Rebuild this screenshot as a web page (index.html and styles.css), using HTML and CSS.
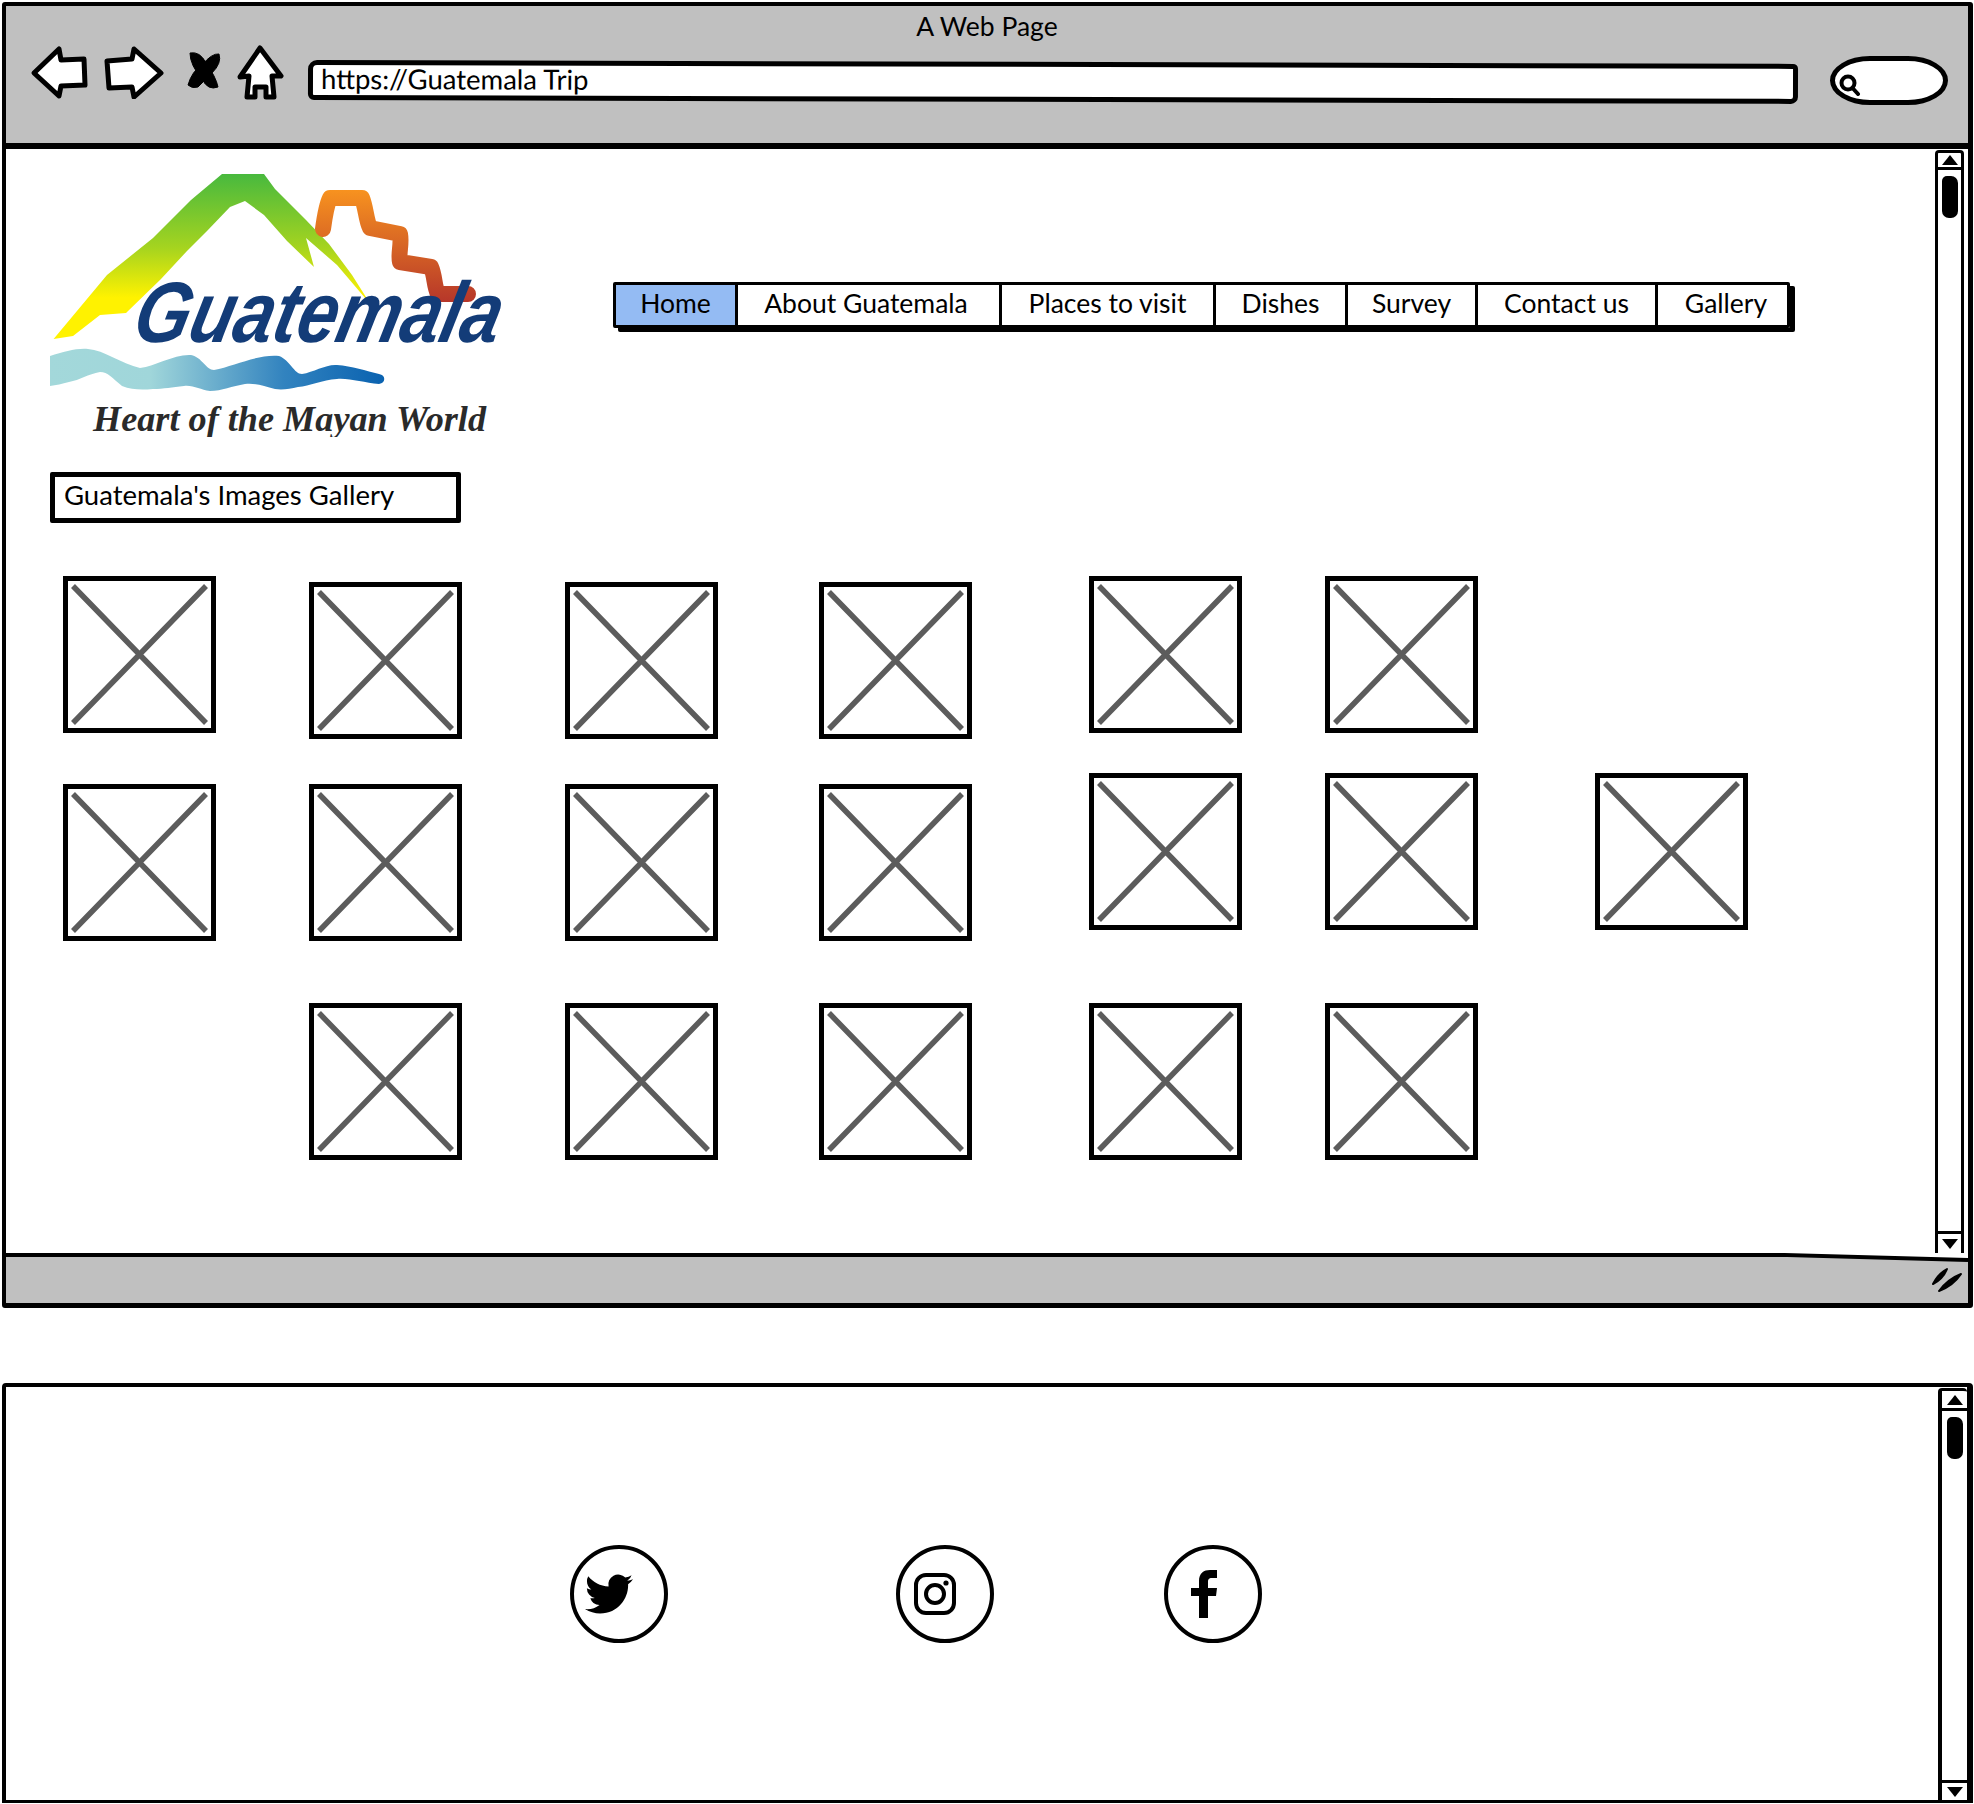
FILE: index.html
```html
<!DOCTYPE html>
<html lang="en">
<head>
  <meta charset="UTF-8" />
  <title>A Web Page</title>
  <link rel="stylesheet" href="styles.css">
</head>
<body>
  <svg class="defs" width="0" height="0">
    <symbol id="cross" viewBox="0 0 143 147">
      <path d="M5 5 L138 142 M138 5 L5 142" />
    </symbol>
  </svg>

  <div class="window">
    <header class="toolbar">
      <div class="title">A Web Page</div>
      <div class="toolbar-row">
        <svg class="tool tool-back" viewBox="30 46 58 54"><path d="M34 74 L59 50 L61 61 L84 60 L85 86 L61 87 L59 97 Z" /></svg>
        <svg class="tool tool-forward" viewBox="104 46 60 54"><path d="M107 62 L132 60 L134 50 L161 74 L134 98 L132 88 L109 89 Z" /></svg>
        <svg class="tool tool-stop" viewBox="184 46 40 54"><path d="M190 54 Q200 52 206 64 Q216 78 218 88 Q208 92 202 80 Q190 66 190 54 Z M219 55 Q222 64 212 74 L198 88 Q192 90 188 86 Q192 72 202 66 Q212 54 219 55 Z" /></svg>
        <svg class="tool tool-home" viewBox="236 46 48 56"><path d="M260 49 L281 77 L272 77 L274 98 L266 98 L266 88 L255 88 L255 98 L247 98 L249 77 L240 78 Z" /></svg>
        <div class="url">https://Guatemala Trip</div>
        <div class="search">
          <svg class="search-icon" viewBox="0 0 22 22"><circle cx="9" cy="9" r="6.5" /><path d="M13.5 14 L19 20" /></svg>
        </div>
      </div>
    </header>

    <div class="content">
      <main class="page">
        <div class="page-head">
          <svg class="logo" viewBox="0 0 464 263">
            <defs>
              <linearGradient id="mountain" x1="0" y1="0" x2="0" y2="1">
                <stop offset="0" stop-color="#48b93e" />
                <stop offset="0.45" stop-color="#a6d41f" />
                <stop offset="0.75" stop-color="#fff200" />
              </linearGradient>
              <linearGradient id="stairs" gradientUnits="userSpaceOnUse" x1="0" y1="15" x2="0" y2="130">
                <stop offset="0" stop-color="#f8931f" />
                <stop offset="1" stop-color="#b5352a" />
              </linearGradient>
              <linearGradient id="river" x1="0" y1="0" x2="1" y2="0">
                <stop offset="0" stop-color="#a3d8da" />
                <stop offset="0.3" stop-color="#a0d6da" />
                <stop offset="0.7" stop-color="#3283bf" />
                <stop offset="1" stop-color="#0a62b0" />
              </linearGradient>
            </defs>
            <path fill="url(#mountain)" d="M3.6 165 L57 101 L103 64 L141 26 L172 0 L214 0 L225 15 L256 46 L279 70 L302 101 L321 131 L287 91 L256 64 L264 93 L237 67 L214 41 L195 27 L180 33 L157 57 L137 77 L111 105 L76 139 L50 141 L23 162 Z" />
            <path class="logo-stairs" d="M273 55 C275 40 277 30 280 24 L312 24 C316 34 316 46 320 54 L350 60 C352 70 348 80 350 88 L381 93 C385 102 384 112 388 120 L418 120" />
            <path fill="url(#river)" d="M0 182 C14 178 26 174 38 175 C54 176 72 190 90 194 C106 192 124 180 141 181 C152 183 156 196 164 196 C184 192 208 180 229 182 C240 186 244 200 252 200 C264 198 276 190 287 191 C302 192 316 197 329 200 C336 201 336 209 329 210 C314 209 300 204 287 205 C272 206 260 212 248 213 C240 215 232 216 225 215 C214 212 206 209 195 210 C182 212 172 217 160 217 C150 216 144 211 134 212 C122 213 114 215 103 215 C92 216 82 216 72 212 C62 204 58 198 50 198 C38 200 30 206 19 208 C12 210 6 211 0 212 Z" />
            <text class="logo-name" transform="translate(80 168) skewX(-13)" x="0" y="0" textLength="366" lengthAdjust="spacingAndGlyphs">Guatemala</text>
            <text class="logo-tag" x="43" y="257" textLength="393" lengthAdjust="spacingAndGlyphs">Heart of the Mayan World</text>
          </svg>
          <nav class="menu">
            <a class="menu-item active" href="#home">Home</a>
            <a class="menu-item item-about" href="#about">About Guatemala</a>
            <a class="menu-item" href="#places">Places to visit</a>
            <a class="menu-item" href="#dishes">Dishes</a>
            <a class="menu-item" href="#survey">Survey</a>
            <a class="menu-item" href="#contact">Contact us</a>
            <a class="menu-item item-gallery" href="#gallery">Gallery</a>
          </nav>
        </div>

        <div class="gallery-title">Guatemala's Images Gallery</div>

        <div class="gallery">
          <div class="thumb"><svg><use href="#cross" /></svg></div>
          <div class="thumb low"><svg><use href="#cross" /></svg></div>
          <div class="thumb low"><svg><use href="#cross" /></svg></div>
          <div class="thumb low"><svg><use href="#cross" /></svg></div>
          <div class="thumb"><svg><use href="#cross" /></svg></div>
          <div class="thumb"><svg><use href="#cross" /></svg></div>
          <div></div>

          <div class="thumb lower"><svg><use href="#cross" /></svg></div>
          <div class="thumb lower"><svg><use href="#cross" /></svg></div>
          <div class="thumb lower"><svg><use href="#cross" /></svg></div>
          <div class="thumb lower"><svg><use href="#cross" /></svg></div>
          <div class="thumb"><svg><use href="#cross" /></svg></div>
          <div class="thumb"><svg><use href="#cross" /></svg></div>
          <div class="thumb"><svg><use href="#cross" /></svg></div>

          <div></div>
          <div class="thumb"><svg><use href="#cross" /></svg></div>
          <div class="thumb"><svg><use href="#cross" /></svg></div>
          <div class="thumb"><svg><use href="#cross" /></svg></div>
          <div class="thumb"><svg><use href="#cross" /></svg></div>
          <div class="thumb"><svg><use href="#cross" /></svg></div>
        </div>
      </main>

      <div class="scrollbar">
        <div class="scroll-btn"><span class="arrow-up"></span></div>
        <div class="scroll-thumb"></div>
        <div class="scroll-btn bottom"><span class="arrow-down"></span></div>
      </div>
    </div>

    <div class="statusbar">
      <svg class="status-edge" viewBox="0 0 300 9" preserveAspectRatio="none"><path class="status-wedge" d="M0 0 L300 0 L300 7 Q180 5 0 0 Z" /><path class="status-line" d="M0 1 Q180 5 300 7" /></svg>
      <svg class="grip" viewBox="1930 1270 34 30"><path d="M1933 1289 Q1938 1279 1947 1274 Q1943 1284 1933 1289 Z M1939 1296 Q1948 1284 1961 1279 Q1953 1291 1939 1296 Z" /></svg>
    </div>
  </div>

  <footer class="social-panel">
    <div class="social">
      <a class="social-link" href="#twitter">
        <svg class="icon-twitter" viewBox="0 0 24 24"><path d="M23.953 4.57a10 10 0 01-2.825.775 4.958 4.958 0 002.163-2.723c-.951.555-2.005.959-3.127 1.184a4.92 4.92 0 00-8.384 4.482C7.69 8.095 4.067 6.13 1.64 3.162a4.822 4.822 0 00-.666 2.475c0 1.71.87 3.213 2.188 4.096a4.904 4.904 0 01-2.228-.616v.06a4.923 4.923 0 003.946 4.827 4.996 4.996 0 01-2.212.085 4.936 4.936 0 004.604 3.417 9.867 9.867 0 01-6.102 2.105c-.39 0-.779-.023-1.17-.067a13.995 13.995 0 007.557 2.209c9.053 0 13.998-7.496 13.998-13.985 0-.21 0-.42-.015-.63A9.935 9.935 0 0024 4.59z" /></svg>
      </a>
      <a class="social-link" href="#instagram">
        <svg class="icon-instagram" viewBox="0 0 42 42"><rect x="2" y="2" width="38" height="38" rx="10" /><circle cx="21" cy="21" r="9" /><circle class="dot" cx="32" cy="10" r="2.6" /></svg>
      </a>
      <a class="social-link" href="#facebook">
        <svg class="icon-facebook" viewBox="0 0 26 48"><path d="M8 48 L8 26 L0 26 L0 18 L8 18 L8 11 C8 3 13 0 19 0 L26 0 L26 8 L21 8 C17.500 8 17 10 17 12 L17 18 L26 18 L25 26 L17 26 L17 48 Z" /></svg>
      </a>
    </div>
    <div class="scrollbar footer-scroll">
      <div class="scroll-btn"><span class="arrow-up"></span></div>
      <div class="scroll-thumb"></div>
      <div class="scroll-btn bottom"><span class="arrow-down"></span></div>
    </div>
  </footer>
</body>
</html>
```
FILE: styles.css
```css
* { box-sizing: border-box; margin: 0; padding: 0; }
html, body { height: 1804px; overflow: hidden; }
body { background: white; color: black; font-family: "Lato", "Open Sans", sans-serif; font-size: 27px; padding: 2px 1px 0 2px; }
a { color: black; text-decoration: none; }
.defs { position: absolute; }

/* browser window */
.window { border: 4px solid black; border-right-width: 5px; border-bottom-width: 5px; height: 1306px; display: flex; flex-direction: column; border-radius: 3px; }
.toolbar { background: #c0c0c0; height: 143px; flex: none; border-bottom: 6px solid black; }
.title { text-align: center; line-height: 30px; padding-top: 5px; margin-bottom: 1px; font-size: 26.5px; }
.toolbar-row { display: flex; align-items: flex-start; margin-top: 4px; padding-left: 24px; }

.tool { height: 54px; fill: white; stroke: black; stroke-width: 5; stroke-linejoin: round; flex-shrink: 0; }
.tool-back { width: 58px; margin-right: 16px; }
.tool-forward { width: 60px; margin-right: 20px; }
.tool-stop { width: 40px; margin-right: 12px; fill: black; stroke-width: 1; }
.tool-home { width: 48px; height: 56px; margin-right: 24px; }

.url { width: 1490px; height: 40px; margin-top: 15px; background: white; border: 5px solid black; border-radius: 9px 5px 7px 6px; padding-left: 8px; line-height: 28px; font-size: 27.5px; transform: rotate(0.15deg); transform-origin: left center; }
.search { width: 118px; height: 49px; margin: 11px 0 0 32px; background: white; border: 5px solid black; border-radius: 40px / 50%; padding: 13px 0 0 4px; }
.search-icon { display: block; width: 22px; height: 22px; fill: none; stroke: black; stroke-width: 4; stroke-linecap: round; }

/* page inside the window */
.content { flex: 1; display: flex; min-height: 0; }
.page { flex: 1; padding: 25px 0 0 44px; }
.page-head { display: flex; align-items: flex-start; }
.logo { width: 464px; height: 263px; flex-shrink: 0; }
.logo-stairs { fill: none; stroke: url(#stairs); stroke-width: 16; stroke-linejoin: round; stroke-linecap: round; }
.logo-name { font-family: "Liberation Sans", sans-serif; font-style: italic; font-weight: 700; font-size: 86px; fill: #133c78; }
.logo-tag { font-family: "Liberation Serif", serif; font-style: italic; font-weight: 700; font-size: 35px; fill: #2a2a2a; }

.menu { display: grid; grid-template-columns: 122px 264px 214px 132px 130px 180px 129px; margin: 108px 0 0 99px; border: 3px solid black; height: 46px; width: 1177px; box-shadow: 5px 4px 0 black; border-radius: 2px; font-size: 26.5px; }
.menu-item { display: flex; align-items: center; justify-content: center; border-right: 3px solid black; height: 40px; padding-bottom: 4px; }
.menu-item:last-child { border-right: 0; }
.menu-item.active { background: #94bbf3; }
.item-about { padding-right: 5px; }
.item-gallery { padding-left: 7px; }

.gallery-title { width: 411px; height: 51px; margin-top: 35px; border: 5px solid black; border-radius: 2px; padding-left: 9px; line-height: 35px; font-size: 27.5px; }

.gallery { display: grid; grid-template-columns: 246px 256px 254px 270px 236px 270px 153px; grid-template-rows: 197px 230px 157px; margin: 53px 0 0 13px; }
.thumb { width: 153px; height: 157px; border: 5px solid black; }
.thumb.low { margin-top: 6px; }
.thumb.lower { margin-top: 11px; }
.thumb svg { display: block; width: 143px; height: 147px; fill: none; stroke: #5c5c5c; stroke-width: 5.5; }

/* scrollbars */
.scrollbar { width: 29px; margin: 1px 4px 0 0; border: 3px solid black; border-bottom: 0; border-radius: 4px 4px 0 0; display: flex; flex-direction: column; flex-shrink: 0; }
.scroll-btn { height: 17px; border-bottom: 3px solid black; display: flex; justify-content: center; align-items: center; flex-shrink: 0; }
.scroll-btn.bottom { margin-top: auto; height: 22px; border-top: 3px solid black; border-bottom: 0; }
.scroll-thumb { width: 16px; height: 42px; margin: 6px auto 0; background: black; border-radius: 5px 7px 7px 7px; }
.arrow-up { width: 0; height: 0; border-left: 8px solid transparent; border-right: 8px solid transparent; border-bottom: 10px solid black; }
.arrow-down { width: 0; height: 0; border-left: 8px solid transparent; border-right: 8px solid transparent; border-top: 10px solid black; }

/* status bar */
.statusbar { position: relative; flex: none; height: 50px; background: #c0c0c0; border-top: 4px solid black; display: flex; justify-content: flex-end; align-items: center; padding-right: 4px; }
.status-edge { position: absolute; right: 0; top: -4px; width: 220px; height: 9px; }
.status-wedge { fill: white; }
.status-line { fill: none; stroke: black; stroke-width: 4; vector-effect: non-scaling-stroke; }
.grip { width: 34px; height: 30px; fill: black; stroke: black; stroke-width: 2; stroke-linejoin: round; }

/* footer panel */
.social-panel { display: flex; height: 420px; margin-top: 75px; border: 4px solid black; border-right-width: 6px; border-bottom-width: 3px; border-radius: 4px 4px 0 0; }
.social { flex: 1; display: flex; align-items: center; padding: 0 0 0 564px; }
.social-link { width: 98px; height: 98px; border: 4px solid black; border-radius: 50%; display: flex; justify-content: center; align-items: center; flex-shrink: 0; }
.social-link:nth-child(2) { margin-left: 228px; }
.social-link:nth-child(3) { margin-left: 170px; }
.icon-twitter { width: 48px; height: 48px; margin-right: 20px; }
.icon-instagram { width: 42px; height: 42px; margin-right: 20px; fill: none; stroke: black; stroke-width: 4; }
.icon-instagram .dot { fill: black; stroke: none; }
.icon-facebook { width: 26px; height: 48px; margin-right: 18px; }
.footer-scroll { width: 29px; margin: 1px 0 0 0; border-right: 0; border-left-width: 4px; }
.footer-scroll .scroll-btn { height: 20px; }
.footer-scroll .scroll-btn.bottom { height: 20px; }
```
